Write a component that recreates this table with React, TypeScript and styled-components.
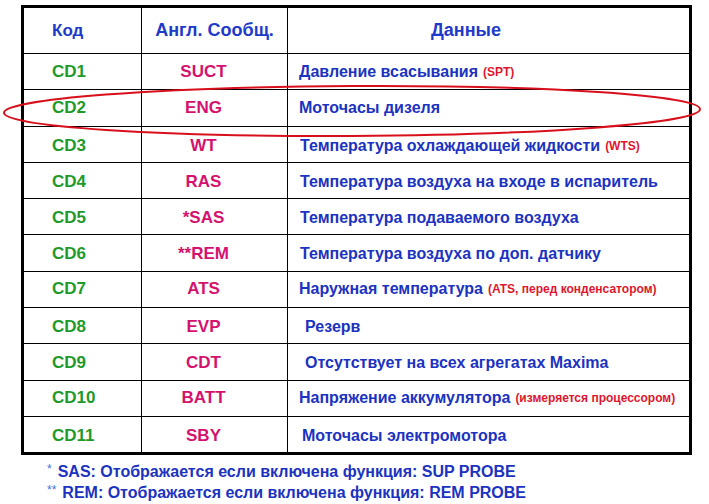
import React from 'react';
import styled, { createGlobalStyle } from 'styled-components';

const GlobalStyle = createGlobalStyle`
  body {
    margin: 0;
    background: #ffffff;
    font-family: "Liberation Sans", Arial, sans-serif;
  }
`;

type Row = {
  code: string;
  msg: string;
  data: string;
  note?: string;
  indent?: number;
  shift?: number;
};

const rows: Row[] = [
  { code: 'CD1', msg: 'SUCT', data: 'Давление всасывания', note: '(SPT)' },
  { code: 'CD2', msg: 'ENG', data: 'Моточасы дизеля' },
  { code: 'CD3', msg: 'WT', data: 'Температура охлаждающей жидкости', note: '(WTS)', indent: 1, shift: 2 },
  { code: 'CD4', msg: 'RAS', data: 'Температура воздуха на входе в испаритель', indent: 1, shift: 1 },
  { code: 'CD5', msg: '*SAS', data: 'Температура подаваемого воздуха', indent: 1, shift: 1 },
  { code: 'CD6', msg: '**REM', data: 'Температура воздуха по доп. датчику', indent: 1, shift: 1 },
  { code: 'CD7', msg: 'ATS', data: 'Наружная температура', note: '(ATS, перед конденсатором)' },
  { code: 'CD8', msg: 'EVP', data: 'Резерв', indent: 6, shift: 1 },
  { code: 'CD9', msg: 'CDT', data: 'Отсутствует на всех агрегатах Maxima', indent: 6, shift: 1 },
  { code: 'CD10', msg: 'BATT', data: 'Напряжение аккумулятора', note: '(измеряется процессором)' },
  { code: 'CD11', msg: 'SBY', data: 'Моточасы электромотора', indent: 3, shift: 1 },
];

const Page = styled.div`
  position: relative;
  width: 709px;
  height: 504px;
  overflow: hidden;
`;

const Table = styled.div`
  margin: 5px 0 0 21px;
  width: 671px;
  border: 3px solid #000;
  box-sizing: border-box;
`;

const Line = styled.div<{ $head?: boolean }>`
  display: grid;
  grid-template-columns: 118px 146px 1fr;
  height: ${(p) => (p.$head ? '45px' : '36.3px')};
  box-sizing: border-box;
  border-top: ${(p) => (p.$head ? 'none' : '1px solid #000')};
`;

const Cell = styled.div<{ $align?: 'left' | 'center'; $pad?: number; $padRight?: number; $shift?: number }>`
  display: flex;
  align-items: center;
  justify-content: ${(p) => (p.$align === 'center' ? 'center' : 'flex-start')};
  padding-left: ${(p) => p.$pad ?? 0}px;
  padding-right: ${(p) => p.$padRight ?? 0}px;
  padding-top: ${(p) => (p.$shift ?? 0) * 2}px;
  border-right: 1px solid #000;
  white-space: nowrap;
  &:last-child {
    border-right: none;
  }
`;

const HeadText = styled.span<{ $size?: number }>`
  color: #1f3ac8;
  font-weight: bold;
  font-size: ${(p) => p.$size ?? 17}px;
`;

const Code = styled.span`
  color: #1f9a2a;
  font-weight: bold;
  font-size: 17px;
`;

const Msg = styled.span`
  color: #d4126e;
  font-weight: bold;
  font-size: 17px;
`;

const Data = styled.span`
  color: #1b33c0;
  font-weight: bold;
  font-size: 16px;
`;

const Note = styled.span`
  color: #e0162e;
  font-weight: bold;
  font-size: 12px;
  margin-left: 5px;
`;

const Notes = styled.div`
  margin: 5px 0 0 47px;
  display: flex;
  flex-direction: column;
`;

const NoteLine = styled.div`
  color: #1b33c0;
  font-weight: bold;
  font-size: 16px;
  line-height: 19px;
  white-space: nowrap;
`;

const Star = styled.span`
  color: #3f6fe0;
  font-weight: normal;
  font-size: 12px;
  vertical-align: 4px;
  margin-right: 6px;
`;

const Ring = styled.svg`
  position: absolute;
  left: 0;
  top: 0;
  pointer-events: none;
`;

export default function App() {
  return (
    <Page>
      <GlobalStyle />
      <Table>
        <Line $head>
          <Cell $pad={28}>
            <HeadText $size={17}>Код</HeadText>
          </Cell>
          <Cell $align="center">
            <HeadText $size={18}>Англ. Сообщ.</HeadText>
          </Cell>
          <Cell $pad={143}>
            <HeadText $size={18}>Данные</HeadText>
          </Cell>
        </Line>
        {rows.map((r) => (
          <Line key={r.code}>
            <Cell $pad={28} $shift={r.shift}>
              <Code>{r.code}</Code>
            </Cell>
            <Cell $align="center" $padRight={22} $shift={r.shift}>
              <Msg>{r.msg}</Msg>
            </Cell>
            <Cell $pad={11 + (r.indent ?? 0)} $shift={r.shift}>
              <Data>{r.data}</Data>
              {r.note && <Note>{r.note}</Note>}
            </Cell>
          </Line>
        ))}
      </Table>
      <Notes>
        <NoteLine>
          <Star>*</Star>SAS: Отображается если включена функция: SUP PROBE
        </NoteLine>
        <NoteLine>
          <Star>**</Star>REM: Отображается если включена функция: REM PROBE
        </NoteLine>
      </Notes>
      <Ring width="709" height="504" viewBox="0 0 709 504">
        <ellipse cx="352" cy="111" rx="348" ry="25" fill="none" stroke="#d8101c" strokeWidth="2" transform="rotate(-0.3 352 111)" />
      </Ring>
    </Page>
  );
}
